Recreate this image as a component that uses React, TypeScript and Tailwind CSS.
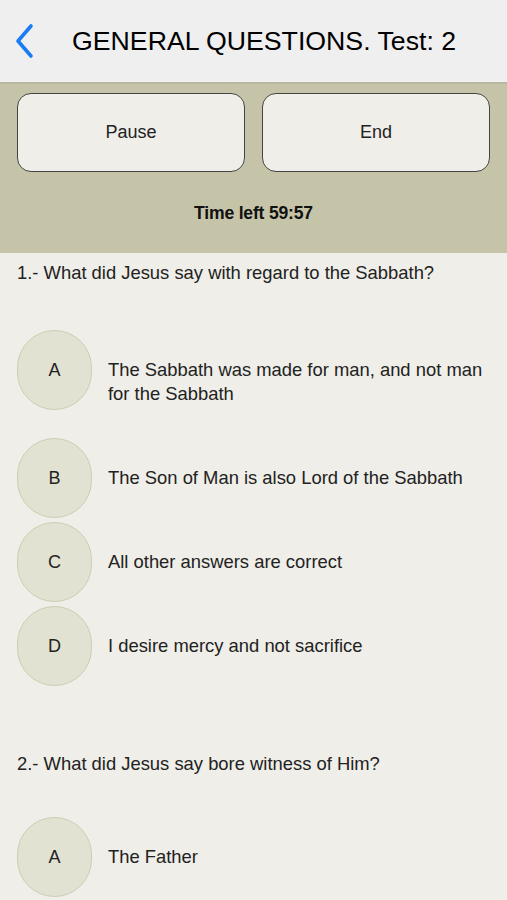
import React from 'react';

type Option = { letter: string; text: string };

const questions: { title: string; options: Option[] }[] = [
  {
    title: '1.- What did Jesus say with regard to the Sabbath?',
    options: [
      { letter: 'A', text: 'The Sabbath was made for man, and not man for the Sabbath' },
      { letter: 'B', text: 'The Son of Man is also Lord of the Sabbath' },
      { letter: 'C', text: 'All other answers are correct' },
      { letter: 'D', text: 'I desire mercy and not sacrifice' },
    ],
  },
  {
    title: '2.- What did Jesus say bore witness of Him?',
    options: [{ letter: 'A', text: 'The Father' }],
  },
];

const OptionRow: React.FC<{ option: Option }> = ({ option }) => (
  <div className="flex items-start min-h-[84px] pl-[17px] pr-4">
    <div className="w-[75px] h-[80px] shrink-0 rounded-full bg-[#e2e2d2] border border-[#cdcdb3] flex items-center justify-center text-[18px] text-[#222]">
      {option.letter}
    </div>
    <p className="ml-4 pt-[28px] text-[18.4px] leading-6 text-[#222]">{option.text}</p>
  </div>
);

const App: React.FC = () => {
  return (
    <div className="w-[507px] h-[900px] overflow-hidden bg-[#efeee8] font-['Liberation_Sans',Arial,sans-serif]">
      {/* Nav bar */}
      <div className="h-[84px] bg-[#efefef] flex items-center border-b-2 border-[#b8b7a0]">
        <svg className="ml-[13px] w-[22px] h-[36px]" viewBox="0 0 22 36" fill="none">
          <path d="M18 3 L5 18 L18 33" stroke="#1a7cf5" strokeWidth="3.6" strokeLinecap="round" strokeLinejoin="round" />
        </svg>
        <h1 className="ml-[37px] text-[26.7px] text-black">GENERAL QUESTIONS. Test: 2</h1>
      </div>

      {/* Timer panel */}
      <div className="bg-[#c5c4a8] h-[169px] px-[17px] pt-[9px]">
        <div className="grid grid-cols-2 gap-[17px]">
          <button className="h-[79px] rounded-[14px] border-[1.5px] border-[#444] bg-[#efeee9] text-[18px] text-[#222]">
            Pause
          </button>
          <button className="h-[79px] rounded-[14px] border-[1.5px] border-[#444] bg-[#efeee9] text-[18px] text-[#222]">
            End
          </button>
        </div>
        <p className="mt-[28px] text-center text-[17.6px] font-bold text-[#111] tracking-[-0.2px]">Time left 59:57</p>
      </div>

      {/* Questions */}
      <div>
        {questions.map((q, qi) => (
          <div key={qi} className={qi === 0 ? 'pt-[8px]' : 'pt-[62px]'}>
            <p className="px-[17px] text-[18.4px] leading-[24px] text-[#222]">{q.title}</p>
            <div className={qi === 0 ? 'mt-[45px] flex flex-col' : 'mt-[41px] flex flex-col'}>
              {q.options.map((o, oi) => (
                <div key={o.letter} className={oi === 0 && qi === 0 ? 'pb-6' : ''}>
                  <OptionRow option={o} />
                </div>
              ))}
            </div>
          </div>
        ))}
      </div>
    </div>
  );
};

export default App;
